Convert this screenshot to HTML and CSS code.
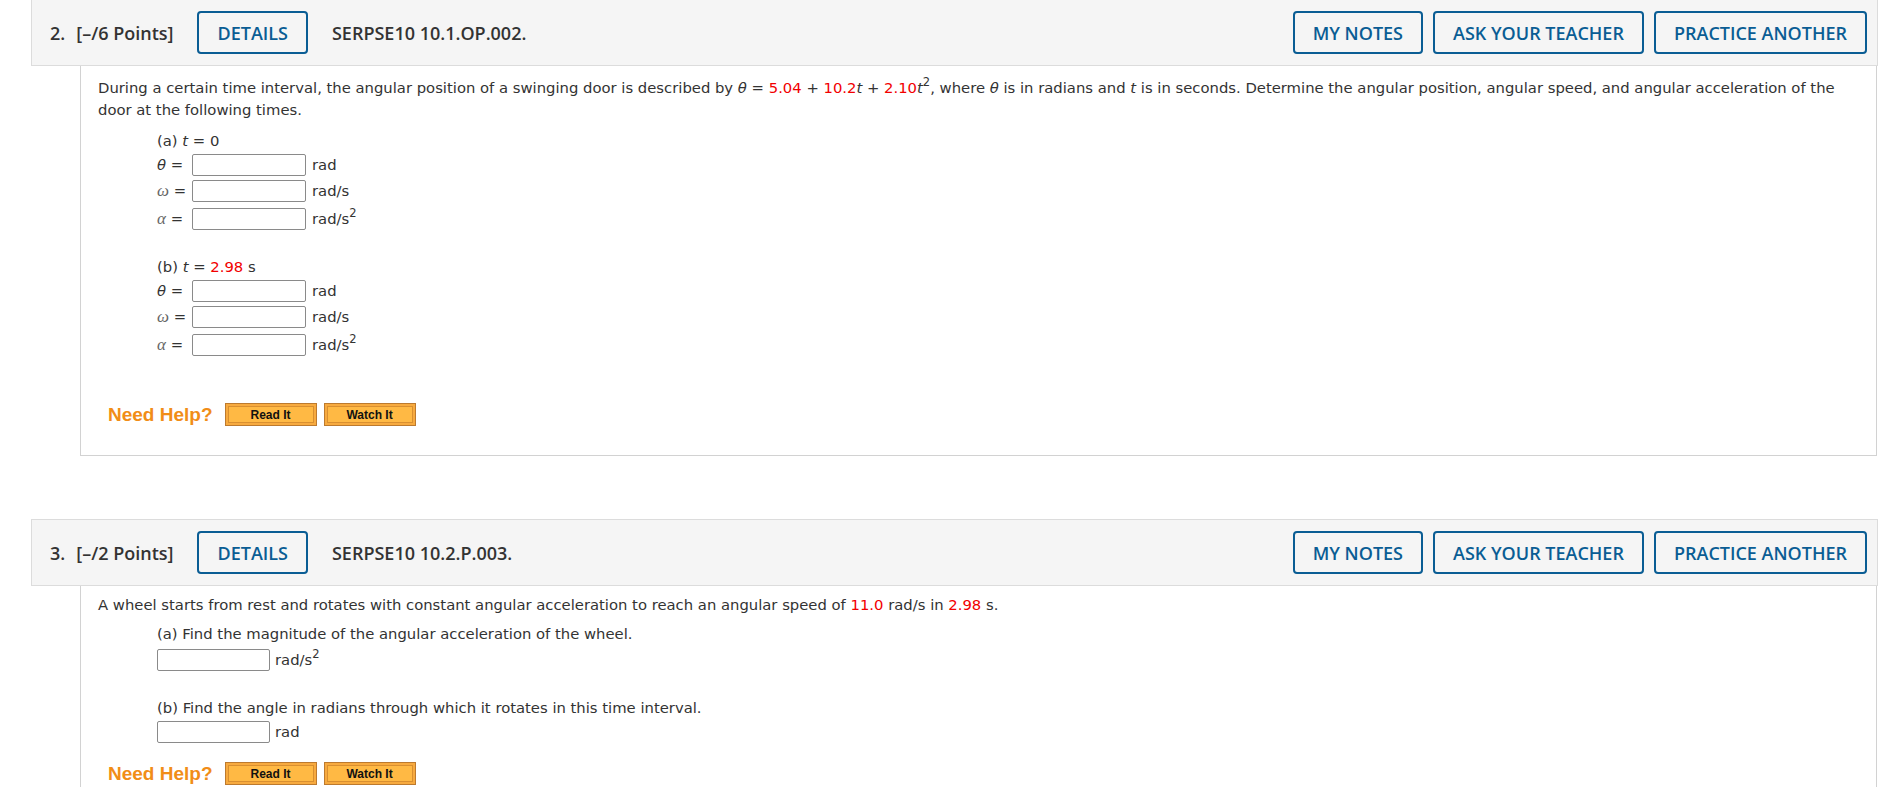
FILE: index.html
```html
<!DOCTYPE html>
<html lang="en">
<head>
<meta charset="utf-8">
<title>Questions</title>
<link rel="stylesheet" href="styles.css">
</head>
<body>
<div class="page">
  <section class="question q1">
    <div class="q-head">
      <span class="q-num">2.</span><span class="q-pts">[–/6 Points]</span>
      <button class="btn btn-details">DETAILS</button>
      <span class="q-id">SERPSE10 10.1.OP.002.</span>
      <div class="head-actions">
        <button class="btn">MY NOTES</button>
        <button class="btn">ASK YOUR TEACHER</button>
        <button class="btn">PRACTICE ANOTHER</button>
      </div>
    </div>
    <div class="q-body">
      <p class="intro">During a certain time interval, the angular position of a swinging door is described by <i>θ</i> = <span class="r">5.04</span> + <span class="r">10.2</span><i>t</i> + <span class="r">2.10</span><i>t</i><sup>2</sup>, where <i>θ</i> is in radians and <i>t</i> is in seconds. Determine the angular position, angular speed, and angular acceleration of the door at the following times.</p>
      <div class="part part-a">
        <div class="part-label">(a) <i>t</i> = 0</div>
        <div class="row"><span class="lbl"><i>θ</i> =</span><input class="ans" type="text"><span class="unit">rad</span></div>
        <div class="row"><span class="lbl"><i class="gk">ω</i> =</span><input class="ans" type="text"><span class="unit">rad/s</span></div>
        <div class="row sq"><span class="lbl"><i class="gk">α</i> =</span><input class="ans" type="text"><span class="unit">rad/s<sup>2</sup></span></div>
      </div>
      <div class="part part-b">
        <div class="part-label">(b) <i>t</i> = <span class="r">2.98</span> s</div>
        <div class="row"><span class="lbl"><i>θ</i> =</span><input class="ans" type="text"><span class="unit">rad</span></div>
        <div class="row"><span class="lbl"><i class="gk">ω</i> =</span><input class="ans" type="text"><span class="unit">rad/s</span></div>
        <div class="row sq"><span class="lbl"><i class="gk">α</i> =</span><input class="ans" type="text"><span class="unit">rad/s<sup>2</sup></span></div>
      </div>
      <div class="help">
        <span class="need">Need Help?</span>
        <button class="hbtn">Read It</button>
        <button class="hbtn">Watch It</button>
      </div>
    </div>
  </section>

  <section class="question q2">
    <div class="q-head">
      <span class="q-num">3.</span><span class="q-pts">[–/2 Points]</span>
      <button class="btn btn-details">DETAILS</button>
      <span class="q-id">SERPSE10 10.2.P.003.</span>
      <div class="head-actions">
        <button class="btn">MY NOTES</button>
        <button class="btn">ASK YOUR TEACHER</button>
        <button class="btn">PRACTICE ANOTHER</button>
      </div>
    </div>
    <div class="q-body">
      <p class="intro">A wheel starts from rest and rotates with constant angular acceleration to reach an angular speed of <span class="r">11.0</span> rad/s in <span class="r">2.98</span> s.</p>
      <div class="part part-a">
        <div class="part-label">(a) Find the magnitude of the angular acceleration of the wheel.</div>
        <div class="row sq"><input class="ans" type="text"><span class="unit">rad/s<sup>2</sup></span></div>
      </div>
      <div class="part part-b">
        <div class="part-label">(b) Find the angle in radians through which it rotates in this time interval.</div>
        <div class="row"><input class="ans" type="text"><span class="unit">rad</span></div>
      </div>
      <div class="help">
        <span class="need">Need Help?</span>
        <button class="hbtn">Read It</button>
        <button class="hbtn">Watch It</button>
      </div>
    </div>
  </section>
</div>
</body>
</html>
```

FILE: styles.css
```css
* { box-sizing: border-box; }

html, body {
  margin: 0;
  padding: 0;
  background: #ffffff;
  overflow: hidden;
}

body {
  font-family: "DejaVu Sans", Verdana, sans-serif;
  font-size: 14.8px;
  color: #333333;
}

.page {
  margin-left: 31px;
  width: 1847px;
}

.q1 { margin-top: -1px; }
.q2 { margin-top: 63px; }

/* header bar */
.q-head {
  display: flex;
  align-items: center;
  height: 67px;
  padding: 0 10px 0 18px;
  background: #f5f5f5;
  border: 1px solid #dcdcdc;
  font-family: "Open Sans", sans-serif;
  font-weight: 600;
  font-size: 18px;
  color: #333333;
  white-space: nowrap;
}

.q-pts { margin-left: 11px; }

.btn {
  font-family: "Open Sans", sans-serif;
  font-weight: 600;
  font-size: 18px;
  color: #0a5d94;
  background: transparent;
  border: 2px solid #0a5d94;
  border-radius: 4px;
  height: 43px;
  padding: 0 18px;
  cursor: pointer;
}

.btn-details { margin-left: 24px; }
.q-id { margin-left: 24px; }

.head-actions {
  margin-left: auto;
  display: flex;
  gap: 10px;
}

/* question body */
.q-body {
  margin-left: 49px;
  margin-right: 1px;
  border: 1px solid #d2d2d2;
  border-top: none;
  line-height: 22px;
  padding: 11px 24px 29px 17px;
}

.q2 .q-body { padding-top: 8px; }

.intro { margin: 0; }

i { font-style: italic; }

.r { color: #f20000; }

sup {
  font-size: 11.5px;
  line-height: 0;
  vertical-align: 7px;
}

.part { margin-left: 59px; }
.q1 .part-a { margin-top: 9px; }
.q2 .part-a { margin-top: 7px; }
.part-b { margin-top: 24px; }

.part-label { line-height: 22px; }

.row {
  display: flex;
  align-items: center;
  height: 26px;
}

.row.sq {
  height: 28px;
  padding-top: 2px;
}

.lbl {
  width: 35px;
  flex: none;
  white-space: nowrap;
}

.gk {
  font-family: "Liberation Serif", serif;
  font-size: 17px;
  color: #666666;
}

.ans {
  width: 114px;
  height: 22px;
  margin: 0;
  padding: 0 3px;
  border: 1px solid #8a8a8a;
  border-radius: 2px;
  background: #ffffff;
  flex: none;
}

.q2 .ans { width: 113px; }

.unit { margin-left: 6px; }
.q2 .unit { margin-left: 5px; }

/* need help */
.help {
  display: flex;
  align-items: center;
  height: 23px;
  margin-top: 45px;
  margin-left: 10px;
}

.q2 .help { margin-top: 17px; }

.need {
  font-family: "Liberation Sans", Arial, sans-serif;
  font-weight: bold;
  font-size: 19px;
  color: #f18d17;
  margin-right: 12px;
}

.hbtn {
  width: 92px;
  height: 23px;
  margin: 0 7px 0 0;
  padding: 0;
  border: 1px solid #bd7a2e;
  background: #ffb944;
  box-shadow: inset 0 0 0 2px #f7aa3f, inset 0 0 0 3px #d98f30;
  font-family: "Liberation Sans", Arial, sans-serif;
  font-weight: bold;
  font-size: 12px;
  color: #111111;
  cursor: pointer;
}
```
